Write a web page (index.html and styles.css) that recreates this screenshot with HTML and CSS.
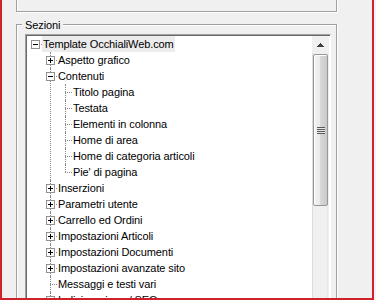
FILE: index.html
```html
<!DOCTYPE html>
<html lang="it">
<head>
    <meta charset="UTF-8">
    <meta name="viewport" content="width=device-width, initial-scale=1.0">
    <title>Sezioni</title>
    <link rel="stylesheet" href="styles.css">
</head>
<body>

    <div class="window">
        <div class="top-box"></div>

        <div class="group">
            <span class="legend">Sezioni</span>

            <div class="treeview">
                <div class="tree-area">
                    <ul class="tree">
                        <li>
                            <div class="node selected"><span class="toggle minus"></span><span class="label">Template OcchialiWeb.com</span></div>
                            <ul>
                                <li><div class="node"><span class="toggle plus"></span><span class="label">Aspetto grafico</span></div></li>
                                <li>
                                    <div class="node"><span class="toggle minus"></span><span class="label">Contenuti</span></div>
                                    <ul>
                                        <li><div class="node"><span class="label">Titolo pagina</span></div></li>
                                        <li><div class="node"><span class="label">Testata</span></div></li>
                                        <li><div class="node"><span class="label">Elementi in colonna</span></div></li>
                                        <li><div class="node"><span class="label">Home di area</span></div></li>
                                        <li><div class="node"><span class="label">Home di categoria articoli</span></div></li>
                                        <li><div class="node"><span class="label">Pie' di pagina</span></div></li>
                                    </ul>
                                </li>
                                <li><div class="node"><span class="toggle plus"></span><span class="label">Inserzioni</span></div></li>
                                <li><div class="node"><span class="toggle plus"></span><span class="label">Parametri utente</span></div></li>
                                <li><div class="node"><span class="toggle plus"></span><span class="label">Carrello ed Ordini</span></div></li>
                                <li><div class="node"><span class="toggle plus"></span><span class="label">Impostazioni Articoli</span></div></li>
                                <li><div class="node"><span class="toggle plus"></span><span class="label">Impostazioni Documenti</span></div></li>
                                <li><div class="node"><span class="toggle plus"></span><span class="label">Impostazioni avanzate sito</span></div></li>
                                <li><div class="node"><span class="label">Messaggi e testi vari</span></div></li>
                                <li><div class="node"><span class="toggle plus"></span><span class="label">Indicizzazione / SEO</span></div></li>
                            </ul>
                        </li>
                    </ul>
                </div>

                <div class="scrollbar">
                    <div class="sb-btn">
                        <svg width="7" height="4" viewBox="0 0 7 4"><path d="M3 0h1v1h1v1h1v1h1v1H0V3h1V2h1V1h1z" fill="#404040"/></svg>
                    </div>
                    <div class="sb-thumb"><span class="grip"></span></div>
                </div>
            </div>
        </div>
    </div>

</body>
</html>
```

FILE: styles.css
```css
body {
    margin: 0;
    background: #f4f4f4;
    font-family: "Liberation Sans", Arial, sans-serif;
    font-size: 11px;
    color: #000;
}
.window {
    width: 370px;
    height: 298px;
    background: #f0f0f0;
    border: 2px solid #d0212b;
    border-top: none;
    overflow: hidden;
}
.top-box {
    margin: -10px 0 0 14px;
    width: 321px;
    height: 22px;
    box-sizing: border-box;
    border: 1px solid #a0a0a0;
    box-shadow: inset 1px 1px 0 #fff, 1px 1px 0 #fff;
}
.group {
    position: relative;
    margin: 12px 0 0 14px;
    width: 321px;
    height: 300px;
    box-sizing: border-box;
    padding: 9px 5px 0 8px;
    border: 1px solid #a0a0a0;
    box-shadow: inset 1px 1px 0 #fff, 1px 1px 0 #fff;
}
.legend {
    position: absolute;
    top: -8px;
    left: 5px;
    padding: 0 3px;
    line-height: 16px;
    background: #f0f0f0;
    letter-spacing: -0.1px;
}
.treeview {
    display: flex;
    height: 280px;
    padding: 1px 1px 0 1px;
    background: #fff;
    border: 1px solid;
    border-color: #a0a0a0 #fff #fff #a0a0a0;
    box-shadow: inset 1px 1px 0 #696969;
}
.tree-area {
    flex: 1;
    overflow: hidden;
}
.tree, .tree ul {
    list-style: none;
    margin: 0;
    padding: 0;
}
.tree ul {
    margin-left: 15px;
}
.tree li {
    position: relative;
}
/* vertical dotted line for siblings */
.tree ul > li::before {
    content: "";
    position: absolute;
    left: 8px;
    top: 0;
    bottom: 0;
    border-left: 1px dotted #8a8a8a;
}
.tree ul > li:last-child::before {
    bottom: auto;
    height: 8px;
}
.node {
    position: relative;
    display: flex;
    align-items: center;
    height: 16px;
    padding-left: 15px;
}
/* horizontal connector */
.node::before {
    content: "";
    position: absolute;
    left: 8px;
    top: 8px;
    width: 7px;
    border-top: 1px dotted #8a8a8a;
}
.label {
    padding: 0 1px;
    line-height: 16px;
    white-space: nowrap;
    letter-spacing: -0.1px;
}
.selected .label {
    background: #ececec;
}
.toggle {
    position: absolute;
    left: 4px;
    top: 4px;
    width: 9px;
    height: 9px;
    box-sizing: border-box;
    border: 1px solid #919191;
    background: #fff;
    z-index: 1;
}
.toggle::before {
    content: "";
    position: absolute;
    left: 1px;
    top: 3px;
    width: 5px;
    height: 1px;
    background: #000;
}
.toggle.plus::after {
    content: "";
    position: absolute;
    left: 3px;
    top: 1px;
    width: 1px;
    height: 5px;
    background: #000;
}
.scrollbar {
    width: 17px;
    background: linear-gradient(to right, #dcdcdc 0 1px, #f0f0f0 1px 15px, #e6e6e6 15px 16px, #f0f0f0 16px);
}
.sb-btn {
    display: flex;
    justify-content: center;
    align-items: center;
    height: 17px;
    background: #f0f0f0;
}
.sb-thumb {
    display: flex;
    justify-content: center;
    align-items: center;
    height: 152px;
    margin: 1px 1px 0 1px;
    box-sizing: border-box;
    border: 1px solid #979797;
    border-radius: 2px;
    background: linear-gradient(to right, #f4f4f4, #e9e9e9 50%, #d8d8d8 50%, #c9c9c9);
    box-shadow: inset 1px 1px 0 #fff;
}
.grip {
    width: 8px;
    height: 7px;
    background: repeating-linear-gradient(to bottom, #5a5a5a 0 1px, #e8e8e8 1px 2px);
}
```
